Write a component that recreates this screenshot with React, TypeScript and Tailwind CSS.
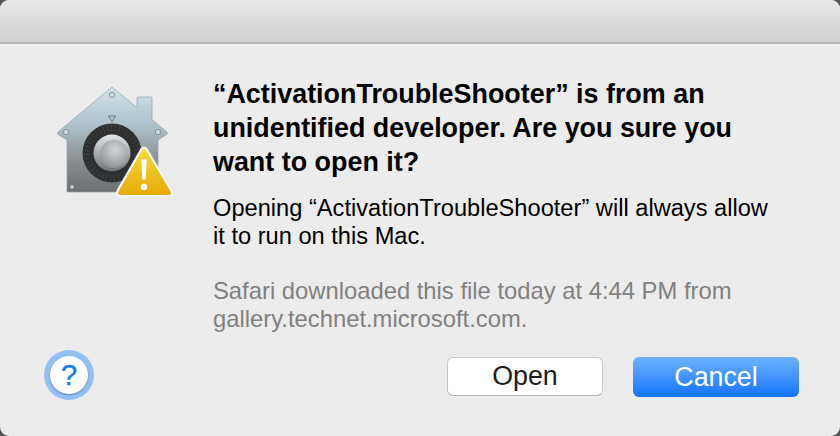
import React from 'react';

// coordinates in the viewBox are the page's own, the svg sits at 54,84
const SecurityIcon: React.FC = () => (
  <svg width="120" height="116" viewBox="54 84 120 116" className="block">
    <defs>
      <linearGradient id="house" x1="0" y1="0" x2="0" y2="1">
        <stop offset="0" stopColor="#d0e2ea" />
        <stop offset="0.35" stopColor="#afc3cc" />
        <stop offset="0.65" stopColor="#8f9599" />
        <stop offset="1" stopColor="#6d6f70" />
      </linearGradient>
      <linearGradient id="knob" x1="0" y1="0" x2="0" y2="1">
        <stop offset="0" stopColor="#e4e7e8" />
        <stop offset="1" stopColor="#6f7375" />
      </linearGradient>
      <radialGradient id="knobTop" cx="0.55" cy="0.35" r="0.75">
        <stop offset="0" stopColor="#d6d9da" />
        <stop offset="1" stopColor="#85898b" />
      </radialGradient>
      <linearGradient id="warn" x1="0" y1="0" x2="0" y2="1">
        <stop offset="0" stopColor="#f8dc3c" />
        <stop offset="1" stopColor="#e5a906" />
      </linearGradient>
    </defs>
    <path
      d="M112 87 L137 107.5 L137 98 Q137 97 138 97 L151 97 Q152 97 152 98 L152 119.7 L167 132 Q168 133.5 166.5 134.5 L158 140 L158 192 L67 192 L67 140 L58 134.5 Q56.5 133.5 58 132 Z"
      fill="url(#house)"
      stroke="#94a1a7"
      strokeWidth="0.7"
      strokeLinejoin="round"
    />
    <circle cx="112" cy="95" r="2.6" fill="#d5dde0" stroke="#70787c" strokeWidth="0.8" />
    <circle cx="66" cy="132" r="2.6" fill="#d5dde0" stroke="#70787c" strokeWidth="0.8" />
    <circle cx="158" cy="132" r="2.6" fill="#d5dde0" stroke="#70787c" strokeWidth="0.8" />
    <circle cx="72" cy="187" r="2.4" fill="#c8ccce" stroke="#5f6365" strokeWidth="0.8" />
    <path d="M108.5 116 L115.5 116 L112 122 Z" fill="none" stroke="#6f777a" strokeWidth="1" />
    <circle cx="112" cy="153" r="29.5" fill="#2e2f30" />
    <circle cx="112" cy="153" r="25" fill="none" stroke="#3e3f40" strokeWidth="7" strokeDasharray="1 3" />
    <circle cx="112" cy="153" r="18.5" fill="url(#knob)" />
    <circle cx="114" cy="154" r="14" fill="url(#knobTop)" />
    <path
      d="M141.5 149 Q144 146 146.5 149 L171 190 Q174 196 168 196 L121 196 Q115 196 118 190 Z"
      fill="url(#warn)"
      stroke="#f8f8f8"
      strokeWidth="2.2"
      strokeLinejoin="round"
    />
    <path d="M142 160 L146 160 L145 179 L143 179 Z" fill="#fff" stroke="#fff" strokeWidth="1.5" strokeLinejoin="round" />
    <circle cx="144" cy="187" r="3.2" fill="#fff" />
  </svg>
);

const App: React.FC = () => {
  return (
    <div className="w-[840px] h-[436px] bg-[#555] overflow-hidden font-['Liberation_Sans',Arial,sans-serif]">
      <div className="w-full h-full flex flex-col rounded-[9px] bg-[#ececec] overflow-hidden">
        {/* Title bar */}
        <div className="h-[44px] shrink-0 border-b-2 border-[#b4b3b4] bg-gradient-to-b from-[#e9e7e8] to-[#d2d0d1]" />

        {/* Message */}
        <div className="flex flex-1 min-h-0">
          <div className="w-[213px] shrink-0 pl-[54px] pt-[40px]">
            <SecurityIcon />
          </div>
          <div className="flex-1 pt-[33px] text-black">
            <h1 className="text-[26.9px] leading-[34px] font-bold">
              “ActivationTroubleShooter” is from an
              <br />
              unidentified developer. Are you sure you
              <br />
              want to open it?
            </h1>
            <p className="mt-[14.5px] text-[23.65px] leading-[28.5px]">
              Opening “ActivationTroubleShooter” will always allow
              <br />
              it to run on this Mac.
            </p>
            <p className="mt-[26.3px] text-[23.8px] leading-[28.5px] text-[#808080]">
              Safari downloaded this file today at 4:44 PM from
              <br />
              gallery.technet.microsoft.com.
            </p>
          </div>
        </div>

        {/* Footer */}
        <div className="flex items-start h-[86px] shrink-0 pl-[44px] pr-[41px]">
          <button className="w-[50px] h-[50px] rounded-full bg-[#92c0f3] flex items-center justify-center">
            <span className="w-[38px] h-[38px] rounded-full bg-white shadow-[0_1px_2px_rgba(0,0,0,0.3)] flex items-center justify-center text-[29px] leading-none text-[#0a7cff] [-webkit-text-stroke:0.3px_#0a7cff]">
              ?
            </span>
          </button>
          <div className="ml-auto flex gap-[30px] pt-[7px]">
            <button className="w-[156px] h-[39px] rounded-[6px] bg-white border border-[#c6c6c6] border-b-[#b0b0b0] text-[26.8px] leading-none text-[#1c1c1c]">
              Open
            </button>
            <button className="w-[166px] h-[40px] rounded-[6px] bg-gradient-to-b from-[#6db3fb] to-[#0a72fd] text-[26.8px] leading-none text-white">
              Cancel
            </button>
          </div>
        </div>
      </div>
    </div>
  );
};

export default App;
